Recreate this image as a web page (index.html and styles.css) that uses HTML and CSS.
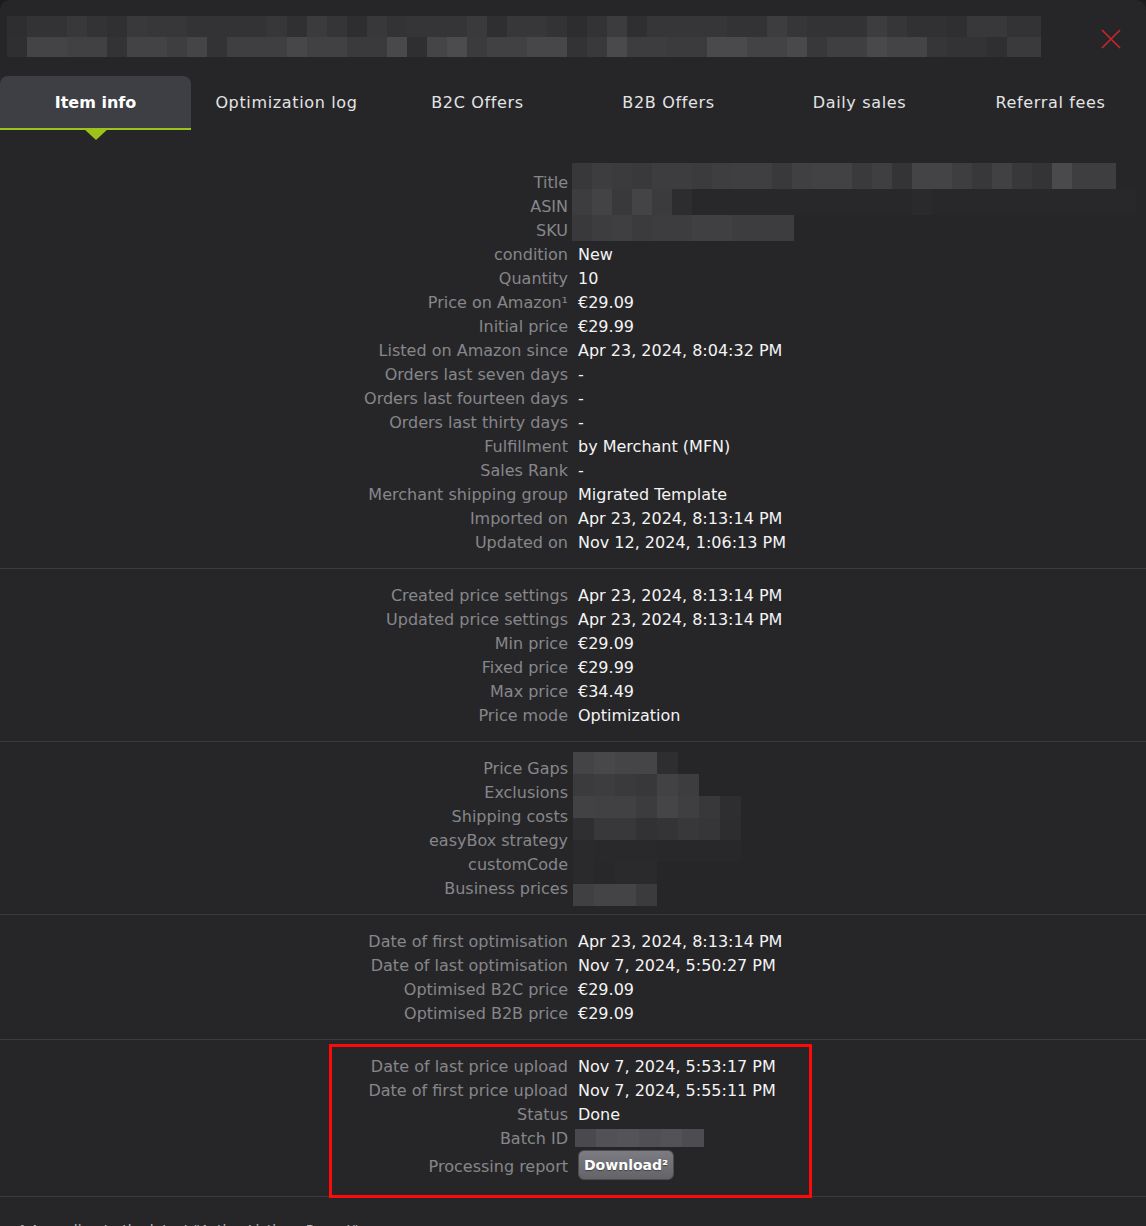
FILE: index.html
```html
<!DOCTYPE html>
<html lang="en">
<head>
  <meta charset="UTF-8" />
  <meta name="viewport" content="width=device-width, initial-scale=1.0"/>
  <title>Item info</title>
  <link rel="stylesheet" href="styles.css">
</head>
<body>
  <div class="dialog">
    <!-- HEADER -->
    <div class="dialog-head">
      <div class="blur-title">
        <div class="blur-line line-one"></div>
        <div class="blur-line line-two"></div>
      </div>
      <button class="close-btn" aria-label="Close">
        <svg viewBox="0 0 20 20" width="20" height="20"><path d="M1 1 L19 19 M19 1 L1 19"/></svg>
      </button>
    </div>

    <!-- TABS -->
    <nav class="tabs">
      <a href="#" class="tab active">Item info</a>
      <a href="#" class="tab">Optimization log</a>
      <a href="#" class="tab">B2C Offers</a>
      <a href="#" class="tab">B2B Offers</a>
      <a href="#" class="tab">Daily sales</a>
      <a href="#" class="tab">Referral fees</a>
    </nav>

    <!-- LISTING -->
    <section class="info-block first">
      <div class="info-grid">
        <span class="lbl">Title</span>
        <div class="blur-cell span3">
          <div class="blur-stack ids">
            <div class="blur-line title-line"></div>
            <div class="blur-line asin-line"></div>
            <div class="blur-line sku-line"></div>
          </div>
        </div>
        <span class="lbl">ASIN</span>
        <span class="lbl">SKU</span>
        <span class="lbl">condition</span><span class="val">New</span>
        <span class="lbl">Quantity</span><span class="val">10</span>
        <span class="lbl">Price on Amazon¹</span><span class="val">€29.09</span>
        <span class="lbl">Initial price</span><span class="val">€29.99</span>
        <span class="lbl">Listed on Amazon since</span><span class="val">Apr 23, 2024, 8:04:32 PM</span>
        <span class="lbl">Orders last seven days</span><span class="val">-</span>
        <span class="lbl">Orders last fourteen days</span><span class="val">-</span>
        <span class="lbl">Orders last thirty days</span><span class="val">-</span>
        <span class="lbl">Fulfillment</span><span class="val">by Merchant (MFN)</span>
        <span class="lbl">Sales Rank</span><span class="val">-</span>
        <span class="lbl">Merchant shipping group</span><span class="val">Migrated Template</span>
        <span class="lbl">Imported on</span><span class="val">Apr 23, 2024, 8:13:14 PM</span>
        <span class="lbl">Updated on</span><span class="val">Nov 12, 2024, 1:06:13 PM</span>
      </div>
    </section>

    <!-- PRICE SETTINGS -->
    <section class="info-block">
      <div class="info-grid">
        <span class="lbl">Created price settings</span><span class="val">Apr 23, 2024, 8:13:14 PM</span>
        <span class="lbl">Updated price settings</span><span class="val">Apr 23, 2024, 8:13:14 PM</span>
        <span class="lbl">Min price</span><span class="val">€29.09</span>
        <span class="lbl">Fixed price</span><span class="val">€29.99</span>
        <span class="lbl">Max price</span><span class="val">€34.49</span>
        <span class="lbl">Price mode</span><span class="val">Optimization</span>
      </div>
    </section>

    <!-- STRATEGY -->
    <section class="info-block">
      <div class="info-grid">
        <span class="lbl">Price Gaps</span>
        <div class="blur-cell span6">
          <div class="blur-stack strategy">
            <div class="blur-line s1"></div>
            <div class="blur-line s2"></div>
            <div class="blur-line s3"></div>
            <div class="blur-line s4"></div>
            <div class="blur-line s5"></div>
            <div class="blur-line s6"></div>
            <div class="blur-line s7"></div>
          </div>
        </div>
        <span class="lbl">Exclusions</span>
        <span class="lbl">Shipping costs</span>
        <span class="lbl">easyBox strategy</span>
        <span class="lbl">customCode</span>
        <span class="lbl">Business prices</span>
      </div>
    </section>

    <!-- OPTIMISATION -->
    <section class="info-block">
      <div class="info-grid">
        <span class="lbl">Date of first optimisation</span><span class="val">Apr 23, 2024, 8:13:14 PM</span>
        <span class="lbl">Date of last optimisation</span><span class="val">Nov 7, 2024, 5:50:27 PM</span>
        <span class="lbl">Optimised B2C price</span><span class="val">€29.09</span>
        <span class="lbl">Optimised B2B price</span><span class="val">€29.09</span>
      </div>
    </section>

    <!-- UPLOAD -->
    <section class="info-block upload">
      <div class="highlight"></div>
      <div class="info-grid">
        <span class="lbl">Date of last price upload</span><span class="val">Nov 7, 2024, 5:53:17 PM</span>
        <span class="lbl">Date of first price upload</span><span class="val">Nov 7, 2024, 5:55:11 PM</span>
        <span class="lbl">Status</span><span class="val">Done</span>
        <span class="lbl">Batch ID</span><div class="blur-cell"><span class="blur-line batch-line"></span></div>
        <span class="lbl">Processing report</span><div class="blur-cell"><button class="download-btn">Download²</button></div>
      </div>
    </section>

    <footer class="notes">
      <p>¹ According to the latest "Active Listings Report".</p>
      <p>² Processing report of the last price upload.</p>
    </footer>
  </div>
</body>
</html>
```

FILE: styles.css
```css
/* ------------------------------------------------------------
   COLOR PALETTE
------------------------------------------------------------ */
:root {
  --bg: #262628;
  --outer: #1c1c1e;
  --line: #3b3b3f;
  --tab-active: #3e3f45;
  --green: #9dc31b;
  --label: #86868b;
  --value: #f4f4f4;
  --red: #c3262c;
}

* {
  margin: 0;
  padding: 0;
  box-sizing: border-box;
}
body {
  font-family: "DejaVu Sans", "Liberation Sans", sans-serif;
  font-size: 16px;
  background-color: var(--outer);
  color: var(--value);
  overflow: hidden;
}
a {
  text-decoration: none;
  color: inherit;
}

.dialog {
  background-color: var(--bg);
  border-radius: 10px;
  min-height: 1300px;
}

/* ------------------------------------------------------------
   HEADER
------------------------------------------------------------ */
.dialog-head {
  display: flex;
  justify-content: space-between;
  align-items: flex-start;
  height: 76px;
  padding: 16px 25px 0 7px;
}
.blur-title {
  width: 1034px;
}
.blur-line {
  display: block;
}
.line-one {
  height: 21px;
  background: linear-gradient(to right,
    #2e2e31 0 20px, #333336 20px 60px, #38383b 60px 80px, #333336 80px 100px,
    #303033 100px 120px, #39393c 120px 140px, #37373a 140px 180px, #333336 180px 260px,
    #37373a 260px 280px, #303033 280px 300px, #3b3b3e 300px 320px, #353538 320px 340px,
    #2e2e31 340px 360px, #38383b 360px 380px, #333336 380px 400px, #353538 400px 460px,
    #3a3a3d 460px 480px, #2f2f32 480px 500px, #37373a 500px 540px, #333336 540px 560px,
    #2d2d30 560px 580px, #333336 580px 600px, #3c3c3f 600px 620px, #2f2f32 620px 640px,
    #363639 640px 720px, #333336 720px 760px, #3d3d40 760px 780px, #363639 780px 800px,
    #333336 800px 860px, #3d3d40 860px 880px, #363639 880px 900px, #313134 900px 940px,
    #2f2f32 940px 960px, #38383b 960px 1000px, #333336 1000px 1034px);
}
.line-two {
  height: 20px;
  background: linear-gradient(to right,
    #2f2f32 0 20px, #444447 20px 60px, #414144 60px 100px, #333336 100px 120px,
    #434346 120px 160px, #3e3e41 160px 180px, #454548 180px 200px, #333336 200px 220px,
    #3f3f42 220px 280px, #474749 280px 300px, #414144 300px 340px, #3a3a3d 340px 380px,
    #49494b 380px 400px, #2f2f32 400px 420px, #454548 420px 440px, #4c4c4e 440px 460px,
    #3b3b3e 460px 480px, #414144 480px 520px, #47474a 520px 560px, #333336 560px 580px,
    #39393c 580px 600px, #4a4a4c 600px 620px, #3d3d40 620px 660px, #3b3b3e 660px 700px,
    #4a4a4c 700px 740px, #434346 740px 780px, #49494b 780px 800px, #38383b 800px 820px,
    #3f3f42 820px 860px, #49494b 860px 880px, #444447 880px 920px, #363639 920px 940px,
    #333336 940px 980px, #2f2f32 980px 1000px, #3a3a3d 1000px 1034px);
}
.close-btn {
  background: none;
  border: none;
  margin-top: 13px;
  width: 20px;
  height: 20px;
  cursor: pointer;
}
.close-btn svg {
  display: block;
  fill: none;
  stroke: var(--red);
  stroke-width: 1.7;
}

/* ------------------------------------------------------------
   TABS
------------------------------------------------------------ */
.tabs {
  display: flex;
}
.tab {
  flex: 1;
  height: 54px;
  padding-top: 2px;
  line-height: 50px;
  text-align: center;
  color: #e4e4e6;
  letter-spacing: 0.65px;
  border-bottom: 2px solid transparent;
  border-radius: 8px 8px 0 0;
  position: relative;
}
.tab.active {
  background-color: var(--tab-active);
  border-bottom-color: var(--green);
  color: #fff;
  font-weight: bold;
  letter-spacing: 0;
}
.tab.active::after {
  content: "";
  position: absolute;
  top: 100%;
  left: 50%;
  margin-left: -13px;
  border-left: 13px solid transparent;
  border-right: 13px solid transparent;
  border-top: 12px solid var(--green);
}

/* ------------------------------------------------------------
   INFO BLOCKS
------------------------------------------------------------ */
.info-block {
  border-top: 1px solid var(--line);
  padding: 14px 0;
  position: relative;
}
.info-block.first {
  border-top: none;
  padding-top: 40px;
}
.info-grid {
  display: grid;
  grid-template-columns: 1fr 1fr;
  grid-auto-rows: 24px;
  column-gap: 10px;
  align-items: start;
}
.lbl,
.val {
  padding-top: 2px;
  line-height: 22px;
  white-space: nowrap;
}
.lbl {
  grid-column: 1;
  text-align: right;
  color: var(--label);
}
.val {
  grid-column: 2;
  color: var(--value);
}
.blur-cell {
  grid-column: 2;
}
.span3 {
  grid-row: span 3;
  height: 72px;
}
.span6 {
  grid-row: span 6;
  height: 144px;
}

/* blurred (pixelated) values */
.blur-stack.ids {
  margin: -7px 0 0 -6px;
}
.title-line {
  width: 544px;
  height: 26px;
  background: linear-gradient(to right,
    #38383b 0 20px, #3d3d40 20px 40px, #3b3b3e 40px 60px, #39393c 60px 80px,
    #3d3d40 80px 120px, #3b3b3e 120px 140px, #3e3e41 140px 160px, #3f3f42 160px 200px,
    #39393c 200px 220px, #404043 220px 240px, #424245 240px 280px, #3a3a3d 280px 300px,
    #3f3f42 300px 320px, #343437 320px 340px, #444447 340px 380px, #3e3e41 380px 400px,
    #38383b 400px 420px, #414144 420px 440px, #38383b 440px 460px, #343437 460px 480px,
    #4a4a4d 480px 500px, #3e3e41 500px 544px);
}
.asin-line {
  width: 564px;
  height: 26px;
  background: linear-gradient(to right,
    #3d3d40 0 20px, #434346 20px 40px, #39393c 40px 60px, #444447 60px 80px,
    #3b3b3e 80px 100px, #2d2d30 100px 120px, #28282a 120px 340px, #2a2a2c 340px 360px,
    #28282a 360px 564px);
}
.sku-line {
  width: 222px;
  height: 26px;
  background: linear-gradient(to right,
    #39393c 0 20px, #3d3d40 20px 40px, #3f3f42 40px 60px, #3b3b3e 60px 80px,
    #3d3d40 80px 120px, #404043 120px 160px, #3d3d40 160px 222px);
}

.blur-stack.strategy {
  margin: -4px 0 0 -5px;
}
.strategy .blur-line {
  height: 22px;
}
.s1 {
  width: 105px;
  background: linear-gradient(to right,
    #444447 0 21px, #48484b 21px 42px, #454548 42px 84px, #2e2e31 84px 105px);
}
.s2 {
  width: 126px;
  background: linear-gradient(to right,
    #3b3b3e 0 21px, #3d3d40 21px 42px, #3a3a3d 42px 63px, #38383b 63px 84px,
    #424245 84px 105px, #3d3d40 105px 126px);
}
.s3 {
  width: 168px;
  background: linear-gradient(to right,
    #424245 0 21px, #414144 21px 63px, #3c3c3f 63px 84px, #454548 84px 105px,
    #3f3f42 105px 126px, #38383b 126px 147px, #2e2e31 147px 168px);
}
.s4 {
  width: 168px;
  background: linear-gradient(to right,
    #2f2f32 0 21px, #38383b 21px 63px, #323235 63px 84px, #343437 84px 105px,
    #38383b 105px 126px, #363639 126px 147px, #2d2d30 147px 168px);
}
.s5 {
  width: 168px;
  background: linear-gradient(to right,
    #2a2a2d 0 21px, #29292c 21px 84px, #28282a 84px 168px);
}
.s6 {
  width: 84px;
  background: linear-gradient(to right,
    #2a2a2d 0 21px, #28282b 21px 42px, #2a2a2d 42px 84px);
}
.s7 {
  width: 84px;
  background: linear-gradient(to right,
    #404043 0 21px, #444447 21px 63px, #3b3b3e 63px 84px);
}

.batch-line {
  width: 129px;
  height: 18px;
  margin: 3px 0 0 -3px;
  background: linear-gradient(to right,
    #4a4a4e 0 21px, #525256 21px 43px, #545458 43px 64px, #505054 64px 86px,
    #535357 86px 107px, #4d4d51 107px 129px);
}

/* ------------------------------------------------------------
   UPLOAD / DOWNLOAD
------------------------------------------------------------ */
.upload .info-grid {
  grid-template-rows: repeat(4, 24px) 32px;
}
.upload .info-grid .lbl:last-of-type {
  padding-top: 6px;
}
.highlight {
  position: absolute;
  left: 329px;
  top: 4px;
  width: 483px;
  height: 154px;
  border: 3px solid #ff0a0a;
  pointer-events: none;
}
.download-btn {
  display: block;
  height: 30px;
  padding: 0 5px;
  font-family: inherit;
  font-size: 14px;
  font-weight: bold;
  color: #fff;
  background: linear-gradient(#7c7c82, #636368);
  border: 1px solid #4c4c50;
  border-radius: 6px;
  text-shadow: 0 1px 1px rgba(0,0,0,0.4);
  cursor: pointer;
}

/* ------------------------------------------------------------
   FOOTNOTES
------------------------------------------------------------ */
.notes {
  border-top: 1px solid var(--line);
  padding: 22px 20px 17px;
  font-size: 14px;
  color: #b8b8bb;
  line-height: 22px;
}
```
